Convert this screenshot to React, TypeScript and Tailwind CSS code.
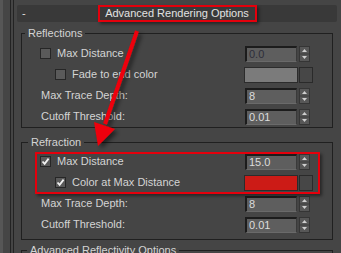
import React from "react";

const FONT = { fontFamily: '"Liberation Sans", Arial, sans-serif' };

function CheckBox({ checked }: { checked?: boolean }) {
  return (
    <span className="flex h-[11px] w-[11px] shrink-0 items-center justify-center border border-[#262626] bg-[#5a5a5a]">
      {checked && (
        <svg width="9" height="9" viewBox="0 0 9 9">
          <path d="M1.5 4.5 L3.6 6.8 L7.6 1.6" fill="none" stroke="#f2f2f2" strokeWidth="1.8" />
        </svg>
      )}
    </span>
  );
}

function Spinner({ value, dim }: { value: string; dim?: boolean }) {
  return (
    <div className="flex w-[68px] items-center gap-[2px]">
      <div
        className={`flex h-[16px] w-[52px] items-center border-b border-l-2 border-r border-t-2 border-b-[#6a6a6a] border-l-[#1c1c1c] border-r-[#3a3a3a] border-t-[#1c1c1c] bg-[#5e5e5e] pl-[2px] text-[11px] leading-none ${
          dim ? "text-[#2e2e3a]" : "text-[#dcdcdc]"
        }`}
      >
        {value}
      </div>
      <svg width="11" height="16" viewBox="0 0 11 16" className="shrink-0">
        <rect x="0.5" y="0.5" width="10" height="15" fill="#575757" stroke="#353535" />
        <line x1="1" y1="8" x2="10" y2="8" stroke="#3d3d3d" />
        <path d="M3 6 L5.5 3 L8 6 Z" fill="#cfcfcf" />
        <path d="M3 10 L5.5 13 L8 10 Z" fill="#cfcfcf" />
      </svg>
    </div>
  );
}

function Swatch({ color }: { color: string }) {
  return (
    <div className="-ml-[1px] flex w-[69px] items-center gap-[1px]">
      <div className={`h-[16px] w-[54px] border border-[#2c2c2c] ${color}`} />
      <div className="h-[16px] w-[14px] border border-[#2a2a2a] bg-[#474747]" />
    </div>
  );
}

function Row({
  indent,
  label,
  check,
  right,
}: {
  indent: string;
  label: string;
  check?: "on" | "off";
  right: React.ReactNode;
}) {
  return (
    <div className={`flex h-[21px] items-center pr-[19px] ${indent}`}>
      {check && <CheckBox checked={check === "on"} />}
      <span className={`text-[11px] leading-none text-[#d4d4d4] ${check ? "ml-[6px]" : ""}`}>{label}</span>
      <div className="ml-auto">{right}</div>
    </div>
  );
}

function Group({
  title,
  legendClass,
  className,
  children,
}: {
  title: string;
  legendClass: string;
  className: string;
  children?: React.ReactNode;
}) {
  return (
    <fieldset className={`border border-[#202020] ${className}`}>
      <legend className={`px-[3px] text-[11px] leading-[12px] text-[#d4d4d4] ${legendClass}`}>{title}</legend>
      {children}
    </fieldset>
  );
}

export default function App() {
  return (
    <div className="relative flex h-[253px] w-[341px] overflow-hidden bg-[#454545]" style={FONT}>
      {/* left frame edges */}
      <div className="w-[3px] bg-[#565656]" />
      <div className="w-[7px]" />
      <div className="w-[3px] border-l border-[#232323]" />

      <div className="flex flex-1 flex-col border-l border-[#232323] pl-[3px] pr-[4px] pt-[5px]">
        {/* rollout header */}
        <div className="grid h-[17px] grid-cols-[1fr_159px_1fr] items-center rounded-[2px] bg-[#393939]">
          <span className="pl-[5px] text-[11px] leading-none text-[#dedede]">-</span>
          <div className="flex h-[17px] items-center justify-center border-2 border-[#e4000c] text-[11px] leading-none text-[#e2e2e2] shadow-[2px_2px_3px_rgba(0,0,0,0.45)]">
            Advanced Rendering Options
          </div>
          <span />
        </div>

        <div className="mx-[4px] flex flex-col">
          <Group title="Reflections" legendClass="ml-[3px]" className="mt-[5px] pt-[4px]">
            <Row indent="pl-[18px]" label="Max Distance" check="off" right={<Spinner value="0.0" dim />} />
            <Row indent="pl-[33px]" label="Fade to end color" check="off" right={<Swatch color="bg-[#7b7b7b]" />} />
            <Row indent="pl-[19px]" label="Max Trace Depth:" right={<Spinner value="8" />} />
            <Row indent="pl-[19px]" label="Cutoff Threshold:" right={<Spinner value="0.01" />} />
          </Group>

          <Group title="Refraction" legendClass="ml-[6px]" className="mt-[8px] pb-[4px] pt-[3px]">
            <div className="relative">
              <Row indent="pl-[18px]" label="Max Distance" check="on" right={<Spinner value="15.0" />} />
              <Row indent="pl-[33px]" label="Color at Max Distance" check="on" right={<Swatch color="bg-[#cc1b16]" />} />
              <div className="pointer-events-none absolute -bottom-px left-[13px] right-[12px] top-px border-2 border-[#e4000c] shadow-[2px_2px_3px_rgba(0,0,0,0.45)]" />
            </div>
            <Row indent="pl-[19px]" label="Max Trace Depth:" right={<Spinner value="8" />} />
            <Row indent="pl-[19px]" label="Cutoff Threshold:" right={<Spinner value="0.01" />} />
          </Group>

          <Group title="Advanced Reflectivity Options" legendClass="ml-[5px]" className="mt-[4px] h-[40px]" />
        </div>
      </div>

      {/* annotation arrow */}
      <svg className="pointer-events-none absolute left-0 top-0" width="341" height="253" viewBox="0 0 341 253">
        <defs>
          <filter id="sh" x="-50%" y="-50%" width="200%" height="200%">
            <feDropShadow dx="3" dy="3" stdDeviation="2" floodColor="#000" floodOpacity="0.5" />
          </filter>
        </defs>
        <g filter="url(#sh)">
          <line x1="137" y1="31" x2="105" y2="124" stroke="#ee0008" strokeWidth="4" />
          <path d="M98 146 L115 129 L94 122 Z" fill="#ee0008" />
        </g>
      </svg>
    </div>
  );
}
